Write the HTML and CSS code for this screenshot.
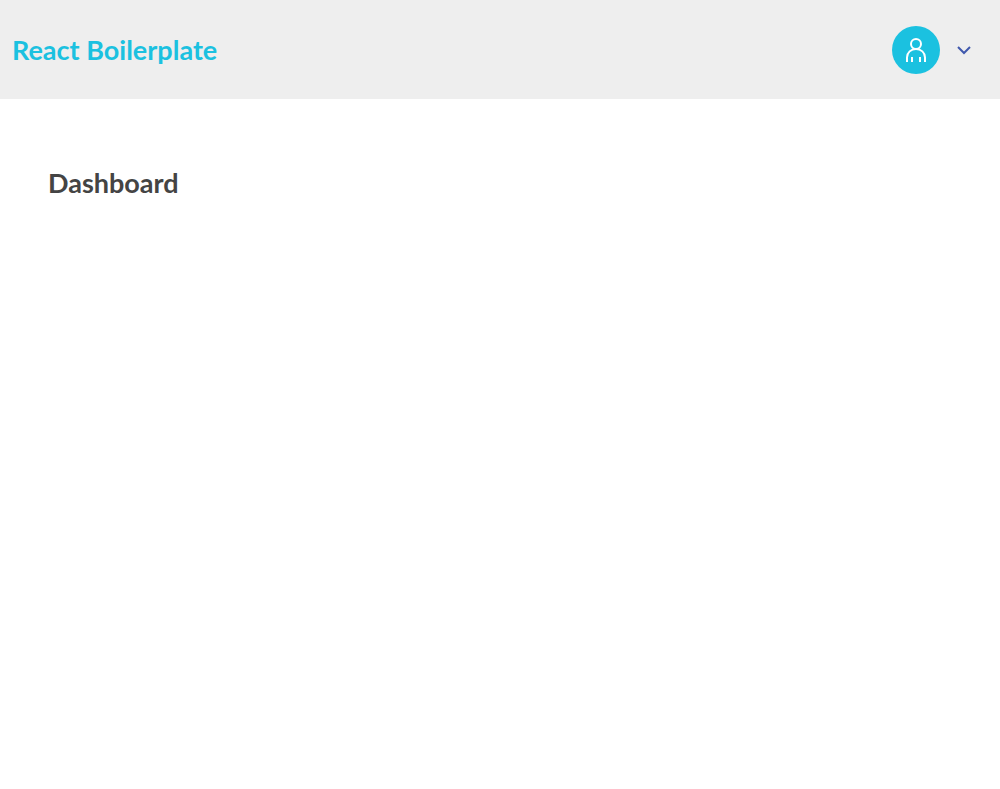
FILE: index.html
```html
<!DOCTYPE html>
<html lang="en">
<head>
  <meta charset="utf-8">
  <meta name="viewport" content="width=device-width, initial-scale=1">
  <title>React Boilerplate</title>
  <link rel="stylesheet" href="styles.css">
</head>
<body>
  <header class="header">
    <a class="brand" href="#">React Boilerplate</a>
    <button class="user-menu" type="button" aria-label="User menu" aria-haspopup="true">
      <span class="avatar">
        <svg width="24" height="28" viewBox="0 0 24 28" fill="none" stroke="currentColor" stroke-width="2" aria-hidden="true">
          <circle cx="12" cy="8" r="5"/>
          <path d="M3 26V21.500C3 16.500 7 13 12 13S21 16.500 21 21.500V26M8 21V26M16 21V26"/>
        </svg>
      </span>
      <svg class="chevron" width="16" height="16" viewBox="0 0 16 16" fill="none" stroke="currentColor" stroke-width="2" aria-hidden="true">
        <path d="M2 5L8 11L14 5"/>
      </svg>
    </button>
  </header>
  <main class="content">
    <h1 class="title">Dashboard</h1>
  </main>
</body>
</html>
```
FILE: styles.css
```css
body {
  margin: 0;
  background: #fff;
  color: #444;
  font-family: Lato, "Liberation Sans", sans-serif;
}

.header {
  display: flex;
  align-items: center;
  justify-content: space-between;
  padding: 26px 28px 25px 12px;
  background: #eee;
}

.brand {
  color: #1bc1e0;
  font-size: 27px;
  font-weight: 700;
  line-height: 32px;
  text-decoration: none;
}

.user-menu {
  display: flex;
  align-items: center;
  gap: 16px;
  padding: 0;
  border: 0;
  background: none;
  color: #4059ad;
  cursor: pointer;
}

.avatar {
  display: flex;
  align-items: center;
  justify-content: center;
  width: 48px;
  height: 48px;
  border-radius: 50%;
  background: #1bc1e0;
  color: #fff;
}

.content {
  padding: 68px 48px;
}

.title {
  margin: 0;
  font-size: 27px;
  font-weight: 700;
  line-height: 32px;
}
```
